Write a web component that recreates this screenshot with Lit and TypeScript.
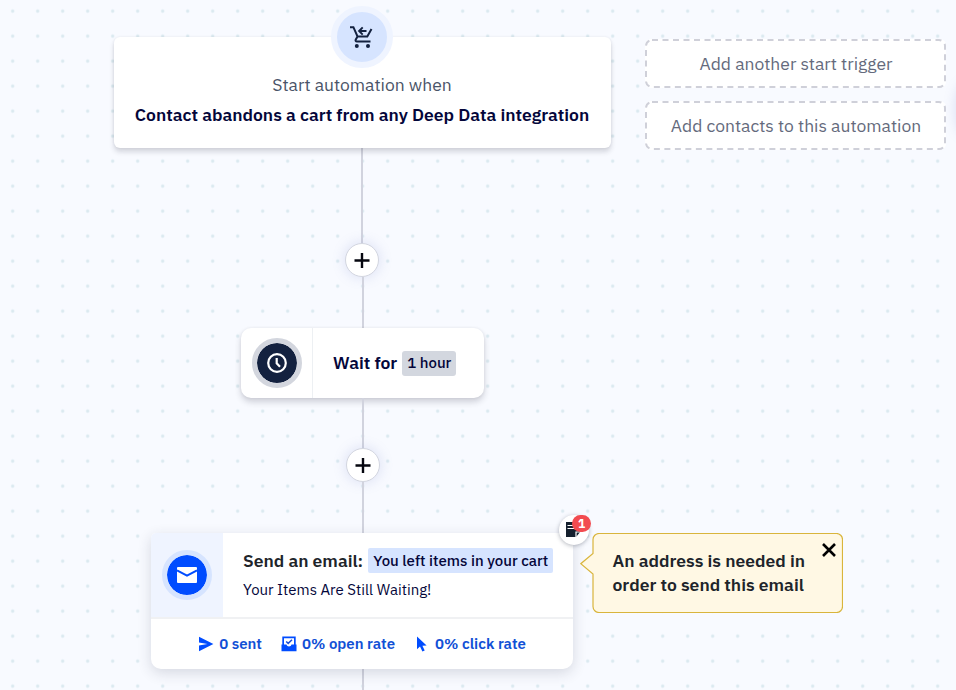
import { LitElement, html, css, svg } from "lit";
import { customElement, property } from "lit/decorators.js";

@customElement("step-connector")
class StepConnector extends LitElement {
  static styles = css`
    :host {
      display: flex;
      flex-direction: column;
      align-items: center;
      width: 100%;
    }
    .line {
      width: 2px;
      flex: 1;
      background: #d1d3de;
    }
    .line.after {
      flex: 0 0 51px;
      margin-left: 1px;
    }
    .add {
      box-sizing: border-box;
      width: 34px;
      height: 34px;
      border: 1px solid #d3d6e0;
      border-radius: 50%;
      background: #fff;
      box-shadow: 0 0 12px 2px rgba(120, 130, 200, 0.17);
      display: grid;
      place-items: center;
      padding: 0;
      margin: 0;
    }
    svg {
      display: block;
    }
  `;
  render() {
    return html`
      <div class="line"></div>
      <button class="add" aria-label="Add step">
        <svg width="16" height="16" viewBox="0 0 16 16">
          <path d="M8 1v15M.5 8.500h15" stroke="#05060f" stroke-width="2.4" />
        </svg>
      </button>
      <div class="line after"></div>
    `;
  }
}

const icons: Record<string, unknown> = {
  sent: svg`<path d="M1 .8 15.4 8 1 15.2V9.6L9.4 8 1 6.4z" fill="#004cff"/>`,
  open: svg`<path fill-rule="evenodd" d="M1.300.5h13.400v8H15.500v6.700H.500V8.500h.800zM3 2.200v6.300h2.500c.3 1.200 1.200 1.900 2.500 1.900s2.200-.7 2.500-1.900h2.500V2.200z" fill="#004cff"/><path d="M5.200 5.500 7.200 7.400 11 3.700" fill="none" stroke="#1a4fd8" stroke-width="1.500"/>`,
  click: svg`<path d="M3 .5v12.800l3-2.700 2.400 5 2.300-1.100-2.300-4.800 4.200-.3z" fill="#004cff"/>`,
};

@customElement("email-stat")
class EmailStat extends LitElement {
  @property() icon = "sent";
  static styles = css`
    :host {
      display: flex;
      align-items: center;
      gap: 5px;
      font-weight: 600;
      font-size: 15px;
      line-height: 20px;
      color: #1150d6;
      white-space: nowrap;
    }
    svg {
      display: block;
    }
  `;
  render() {
    return html`<svg width="16" height="16" viewBox="0 0 16 16">${icons[this.icon]}</svg><span><slot></slot></span>`;
  }
}

@customElement("app-root")
class AppRoot extends LitElement {
  static styles = css`
    :host {
      display: block;
      height: 690px;
      overflow: hidden;
      position: relative;
      font-family: "IBM Plex Sans", Roboto, sans-serif;
      font-size: 17.5px;
      color: #04063a;
      background-color: #f8faff;
      background-image: radial-gradient(circle, #d9e9ef 0, #dceaf1 1.200px, rgba(223, 235, 242, 0) 2.200px);
      background-size: 25px 25px;
      background-position: 0.200px -1.400px;
    }
    .canvas {
      display: flex;
      align-items: flex-start;
      gap: 34px;
      padding: 37px 10px 0 113px;
    }
    .flow {
      width: 498px;
      flex: none;
      display: flex;
      flex-direction: column;
      align-items: center;
    }
    .card {
      box-sizing: border-box;
      background: #fff;
      flex: none;
    }
    .start {
      position: relative;
      width: 497px;
      height: 111px;
      border-radius: 6px;
      padding-top: 33px;
      text-align: center;
      line-height: 30px;
      box-shadow: 0 4px 5px rgba(40, 40, 60, 0.17), 0 0 3px rgba(40, 40, 60, 0.08);
    }
    .lead {
      color: #4a5468;
    }
    .title {
      font-weight: 600;
      white-space: nowrap;
    }
    .start-icon {
      position: absolute;
      left: 50%;
      top: -31px;
      margin-left: -31px;
      box-sizing: border-box;
      width: 62px;
      height: 62px;
      border: 6px solid #eff4ff;
      border-radius: 50%;
      background: #d6e4ff;
      display: grid;
      place-items: center;
    }
    svg {
      display: block;
    }
    .gap-a {
      height: 180px;
    }
    .wait {
      width: 243px;
      height: 70px;
      border-radius: 10px;
      display: flex;
      align-items: center;
      margin-left: 1px;
      box-shadow: 0 4px 6px rgba(40, 40, 60, 0.2), 0 0 3px rgba(40, 40, 60, 0.07);
    }
    .wait-icon {
      width: 72px;
      height: 70px;
      box-sizing: border-box;
      border-right: 1px solid #edf0f3;
      display: grid;
      place-items: center;
    }
    .wait-text {
      padding-left: 20px;
      display: flex;
      align-items: center;
      gap: 5px;
      font-weight: 600;
      line-height: 23px;
    }
    .wait-text > span:first-child {
      padding-bottom: 2px;
    }
    .disc {
      box-sizing: border-box;
      width: 50px;
      height: 50px;
      border-radius: 50%;
      border: 5px solid #d3d6de;
      background: #13213f;
      background-clip: padding-box;
      display: grid;
      place-items: center;
    }
    .disc.blue {
      border-color: #d6e4ff;
      background-color: #004cff;
    }
    .pill {
      display: inline-block;
      padding: 0 5px;
      font-size: 15px;
      font-weight: 500;
      line-height: 25px;
      height: 25px;
      border-radius: 3px;
      background: #d3d7df;
      white-space: nowrap;
    }
    .wait-text .pill {
      line-height: 23px;
    }
    .pill.blue {
      background: #d6e4ff;
      border-radius: 2px;
    }
    .gap-b {
      height: 135px;
      margin-left: 1px;
    }
    .email {
      position: relative;
      width: 422px;
      height: 136px;
      border-radius: 5px 5px 10px 10px;
      box-shadow: 0 4px 14px rgba(40, 45, 70, 0.16);
      display: flex;
      flex-direction: column;
    }
    .email-top {
      display: flex;
      height: 84px;
      border-bottom: 2px solid #f0f1f3;
    }
    .email-icon {
      width: 72px;
      background: #eff4ff;
      border-top-left-radius: 5px;
      display: grid;
      place-items: center;
    }
    .email-body {
      padding: 15px 0 0 20px;
    }
    .email-line {
      display: flex;
      align-items: center;
      gap: 5px;
      height: 25px;
      font-weight: 600;
      color: #20242a;
    }
    .email-line .pill {
      color: #04063a;
    }
    .subject {
      font-size: 15px;
      line-height: 20px;
      margin-top: 7px;
    }
    .stats {
      flex: 1;
      display: flex;
      align-items: center;
      justify-content: center;
      gap: 19px;
    }
    .note {
      position: absolute;
      right: -16px;
      top: -18px;
      width: 30px;
      height: 30px;
      border-radius: 50%;
      background: #fff;
      box-shadow: 0 1px 4px rgba(40, 50, 70, 0.35);
    }
    .note svg {
      position: absolute;
      left: 7px;
      top: 7px;
    }
    .count {
      position: absolute;
      left: 13px;
      top: 0;
      width: 19px;
      height: 17px;
      border-radius: 9px;
      background: #f24b50;
      color: #fff;
      font-size: 12px;
      font-weight: 700;
      line-height: 17px;
      text-align: center;
    }
    .tip {
      position: absolute;
      left: 429px;
      top: 0;
      width: 263px;
      height: 80px;
      color: #20242a;
      font-weight: 600;
      line-height: 24px;
    }
    .tip .frame {
      position: absolute;
      inset: 0;
    }
    .tip p {
      position: relative;
      margin: 16px 0 0 32.5px;
      white-space: nowrap;
    }
    .tip .close {
      position: absolute;
      right: 7px;
      top: 10px;
    }
    .tail {
      width: 2px;
      height: 21px;
      margin-left: 1px;
      background: #d1d3de;
    }
    .side {
      flex: none;
      width: 301px;
      margin-top: 2px;
      display: flex;
      flex-direction: column;
      gap: 13px;
    }
    .option {
      height: 49px;
      display: grid;
      place-items: center;
      background: #fff;
      border-radius: 6px;
      color: #646a7c;
      position: relative;
    }
    .option span {
      padding-left: 1px;
    }
    .option svg {
      position: absolute;
      inset: 0;
    }
    .edge {
      position: absolute;
      left: 956px;
      top: 84px;
      width: 20px;
      height: 50px;
      border-radius: 50%;
      box-shadow: 0 0 12px 2px rgba(120, 130, 200, 0.18);
    }
  `;

  option(label: string) {
    return html`<div class="option">
      <svg width="301" height="49"><rect x="1" y="1" width="299" height="47" rx="6" fill="none" stroke="#cfd0d9" stroke-width="2" stroke-dasharray="6 4.500" /></svg>
      <span>${label}</span>
    </div>`;
  }

  render() {
    return html`
      <div class="canvas">
        <div class="flow">
          <section class="card start">
            <div class="start-icon">
              <svg width="24" height="24" viewBox="0 0 24 24" fill="none" stroke="#13213f" stroke-width="2">
                <path d="M0 2.200h3.400L7.500 11.500H17.300L21.500 4M7.500 11.500 5.700 14.700q-.6 1.700 1.200 1.700H20.500" />
                <path d="M16.500 6H9.400M12.700 2.400 9.100 6 12.700 9.600" stroke-width="1.900" />
                <circle cx="6.800" cy="21" r="2" fill="#13213f" stroke="none" />
                <circle cx="18" cy="21" r="2" fill="#13213f" stroke="none" />
              </svg>
            </div>
            <div class="lead">Start automation when</div>
            <div class="title">Contact abandons a cart from any Deep Data integration</div>
          </section>

          <step-connector class="gap-a"></step-connector>

          <section class="card wait">
            <div class="wait-icon">
              <div class="disc">
                <svg width="20" height="20" viewBox="0 0 20 20" fill="none" stroke="#fff" stroke-width="2.200">
                  <circle cx="10" cy="10" r="8.800" />
                  <path d="M9.700 5v5.300l3.300 3.400" />
                </svg>
              </div>
            </div>
            <div class="wait-text"><span>Wait for</span><span class="pill">1 hour</span></div>
          </section>

          <step-connector class="gap-b"></step-connector>

          <section class="card email">
            <div class="email-top">
              <div class="email-icon">
                <div class="disc blue">
                  <svg width="20" height="16" viewBox="0 0 20 16">
                    <rect width="20" height="16" rx="1" fill="#fff" />
                    <path d="M0 3.400 10 8.700 20 3.400" fill="none" stroke="#004cff" stroke-width="2" />
                  </svg>
                </div>
              </div>
              <div class="email-body">
                <div class="email-line"><span>Send an email:</span><span class="pill blue">You left items in your cart</span></div>
                <div class="subject">Your Items Are Still Waiting!</div>
              </div>
            </div>
            <div class="stats">
              <email-stat icon="sent">0 sent</email-stat>
              <email-stat icon="open">0% open rate</email-stat>
              <email-stat icon="click">0% click rate</email-stat>
            </div>
            <div class="note">
              <svg width="16" height="16" viewBox="0 0 16 16">
                <path d="M0 0h15v9l-5 6H0z" fill="#15202e" />
                <path d="M1.500 3.500h9M1.500 6.500h7" stroke="#fff" stroke-width="1.100" />
                <path d="M10 15.500V10h5.500" fill="none" stroke="#fff" stroke-width="1.200" />
              </svg>
              <span class="count">1</span>
            </div>
            <aside class="tip">
              <svg class="frame" width="263" height="80">
                <path d="M19 .5H256.500a6 6 0 0 1 6 6V73.500a6 6 0 0 1-6 6H19a6 6 0 0 1-6-6V41L.8 30.700 13 20.500V6.500a6 6 0 0 1 6-6z" fill="#fff8e4" stroke="#d9b53c" stroke-width="1.200" />
              </svg>
              <p>An address is needed in<br />order to send this email</p>
              <svg class="close" width="14" height="14" viewBox="0 0 14 14"><path d="M1 1l12 12M13 1 1 13" stroke="#000" stroke-width="2.600" /></svg>
            </aside>
          </section>
          <div class="tail"></div>
        </div>
        <div class="side">
          ${this.option("Add another start trigger")}
          ${this.option("Add contacts to this automation")}
        </div>
      </div>
      <div class="edge"></div>
    `;
  }
}
